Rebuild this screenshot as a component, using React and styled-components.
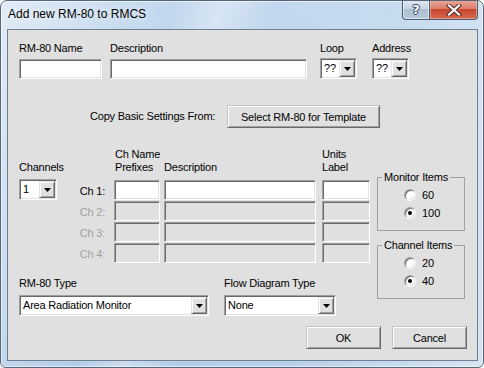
import React from 'react';
import styled, { createGlobalStyle } from 'styled-components';

const GlobalStyle = createGlobalStyle`
  html, body {
    margin: 0;
    padding: 0;
    background: #fff;
  }
  body {
    font-family: "Liberation Sans", Arial, sans-serif;
    font-size: 11px;
    color: #000;
  }
`;

const FACE = '#e0e0e0';

const Window = styled.div`
  box-sizing: border-box;
  width: 484px;
  height: 368px;
  display: flex;
  flex-direction: column;
  padding: 0 5px 6px 6px;
  border: 1px solid #56677a;
  border-radius: 7px 7px 6px 6px;
  background:
    linear-gradient(105deg, rgba(255,255,255,0.5) 0%, rgba(255,255,255,0.15) 20%, rgba(255,255,255,0) 30%, rgba(255,255,255,0.35) 38%, rgba(255,255,255,0) 47%, rgba(255,255,255,0.1) 70%, rgba(255,255,255,0.45) 100%),
    linear-gradient(to bottom, #c2d8ee 0%, #b3cde8 100%);
  box-shadow: inset 0 0 0 1px rgba(255,255,255,0.55);
  overflow: hidden;
`;

const TitleBar = styled.div`
  height: 28px;
  flex-shrink: 0;
  display: flex;
  justify-content: space-between;
  align-items: flex-start;
  margin: 0 -5px 0 -6px;
  padding: 0 5px 0 7px;
`;

const Title = styled.span`
  font-size: 12px;
  line-height: 15px;
  padding-top: 6px;
  color: #000;
  text-shadow: 0 0 6px rgba(255,255,255,0.9);
`;

const Caption = styled.div`
  display: flex;
  margin-top: -1px;
`;

const CaptionButton = styled.div`
  box-sizing: border-box;
  height: 20px;
  display: flex;
  align-items: center;
  justify-content: center;
  border: 1px solid #4c5d71;
  border-top: none;
`;

const HelpButton = styled(CaptionButton)`
  width: 28px;
  border-radius: 0 0 0 4px;
  background: linear-gradient(to bottom, #e1e9f2 0%, #c9d6e4 45%, #aebfd3 50%, #b9cadc 100%);
  box-shadow: inset 0 0 0 1px rgba(255,255,255,0.5);
`;

const CloseButton = styled(CaptionButton)`
  width: 48px;
  border-left: none;
  border-radius: 0 0 4px 0;
  background: linear-gradient(to bottom, #e9a99b 0%, #dc7e6c 45%, #c8452f 50%, #d4684f 100%);
  box-shadow: inset 0 0 0 1px rgba(255,255,255,0.35);
`;

const HelpGlyph = styled.span`
  font-family: "DejaVu Sans", sans-serif;
  font-weight: bold;
  font-size: 13px;
  line-height: 13px;
  color: #fff;
  text-shadow: 0 0 1px #34465b, 1px 0 0 #34465b, -1px 0 0 #34465b, 0 1px 0 #34465b, 0 -1px 0 #34465b;
`;

const Client = styled.div`
  flex: 1;
  display: flex;
  flex-direction: column;
  border: 1px solid #6f7f91;
  background: ${FACE};
  padding: 12px 10px 10px 11px;
`;

const Label = styled.span`
  display: block;
  font-size: 11px;
  line-height: 13px;
  letter-spacing: -0.2px;
  white-space: nowrap;
  color: ${p => (p.$disabled ? '#a0a0a0' : '#000')};
`;

const Row = styled.div`
  display: flex;
  align-items: flex-start;
`;

const Field = styled.div`
  display: flex;
  flex-direction: column;
  gap: ${p => p.$gap ?? 4}px;
  width: ${p => p.$width}px;
  margin-left: ${p => p.$ml ?? 0}px;
`;

const sunken = `
  box-sizing: border-box;
  border: 1px solid;
  border-color: #a0a0a0 #ffffff #ffffff #a0a0a0;
  box-shadow: inset 1px 1px 0 #696969, inset -1px -1px 0 #e3e3e3;
`;

const TextBox = styled.input`
  ${sunken}
  width: ${p => p.$width}px;
  height: 20px;
  margin: 0;
  padding: 0 3px;
  font: inherit;
  outline: none;
  background: #fff;
  &:disabled {
    background: ${FACE};
  }
`;

const ComboBox = styled.div`
  ${sunken}
  width: ${p => p.$width}px;
  height: 21px;
  padding: 1px;
  display: flex;
  background: #fff;
`;

const ComboText = styled.span`
  flex: 1;
  padding-left: 2px;
  line-height: 17px;
  font-size: 11px;
  letter-spacing: -0.2px;
  white-space: nowrap;
  overflow: hidden;
`;

const DropButton = styled.span`
  box-sizing: border-box;
  width: 16px;
  height: 17px;
  display: flex;
  align-items: center;
  justify-content: center;
  background: ${FACE};
  border: 1px solid;
  border-color: #e3e3e3 #696969 #696969 #e3e3e3;
  box-shadow: inset 1px 1px 0 #fff, inset -1px -1px 0 #a0a0a0;
`;

function Combo({ value, width, className }) {
  return (
    <ComboBox $width={width} className={className}>
      <ComboText>{value}</ComboText>
      <DropButton>
        <svg width="7" height="4" viewBox="0 0 7 4">
          <polygon points="0,0 7,0 3.5,4" fill="#000" />
        </svg>
      </DropButton>
    </ComboBox>
  );
}

const Button = styled.button`
  box-sizing: border-box;
  width: ${p => p.$width ?? 75}px;
  height: 23px;
  margin: 0;
  padding: 0;
  font: inherit;
  font-size: 11px;
  letter-spacing: -0.2px;
  color: #000;
  background: ${FACE};
  border: 1px solid;
  border-color: #c4c4c4 #696969 #696969 #c4c4c4;
  box-shadow: inset 1px 1px 0 #fff, inset -1px -1px 0 #a0a0a0;
`;

const CopyRow = styled.div`
  display: flex;
  align-items: center;
  margin-top: 26px;
  padding-left: 71px;
`;

const CopyLabel = styled(Label)`
  width: 137px;
`;

const ChannelSection = styled.div`
  display: flex;
  gap: 7px;
  margin-top: 20px;
`;

const LeftColumn = styled.div`
  display: flex;
  flex-direction: column;
  width: 351px;
`;

const ChannelGrid = styled.div`
  display: grid;
  grid-template-columns: 38px 57px 50px 158px 48px;
  grid-template-rows: 31px repeat(4, 20px);
  row-gap: 1px;
`;

const HeadCell = styled.div`
  padding-top: ${p => (p.$single ? 13 : 0)}px;
  padding-left: ${p => p.$indent ?? 0}px;
`;

const ChLabel = styled(Label)`
  text-align: right;
  padding-right: 9px;
  line-height: 20px;
  padding-top: 1px;
`;

const ChannelsCombo = styled(Combo)`
  margin-top: -1px;
`;

const TypeRow = styled(Row)`
  margin-top: 14px;
  gap: 15px;
`;

const RightColumn = styled.div`
  display: flex;
  flex-direction: column;
  gap: 8px;
  width: 88px;
  margin-top: 23px;
`;

const Group = styled.fieldset`
  box-sizing: border-box;
  margin: 0;
  min-inline-size: 0;
  width: 88px;
  padding: 2px 0 8px 4px;
  border: 1px solid #a0a0a0;
  display: flex;
  flex-direction: column;
`;

const Legend = styled.legend`
  padding: 0 2px;
  margin: 0;
  font-size: 11px;
  line-height: 13px;
  letter-spacing: -0.2px;
  white-space: nowrap;
`;

const RadioRow = styled.label`
  height: 18px;
  display: flex;
  align-items: center;
  gap: 6px;
  margin-left: 22px;
  font-size: 11px;
`;

const RadioCircle = styled.span`
  box-sizing: border-box;
  width: 12px;
  height: 12px;
  border-radius: 50%;
  background: #fff;
  border: 1px solid;
  border-color: #a0a0a0 #f6f6f6 #f6f6f6 #a0a0a0;
  box-shadow: inset 1px 1px 0 #696969, inset -1px -1px 0 #e3e3e3;
  display: flex;
  align-items: center;
  justify-content: center;
  &::after {
    content: '';
    width: 4px;
    height: 4px;
    border-radius: 50%;
    background: ${p => (p.$checked ? '#000' : 'transparent')};
  }
`;

const ButtonRow = styled.div`
  display: flex;
  justify-content: flex-end;
  gap: 11px;
  margin-top: 10px;
`;

function Radio({ label, checked }) {
  return (
    <RadioRow>
      <RadioCircle $checked={checked} />
      {label}
    </RadioRow>
  );
}

const channels = ['Ch 1:', 'Ch 2:', 'Ch 3:', 'Ch 4:'];

export default function App() {
  return (
    <>
      <GlobalStyle />
      <Window>
        <TitleBar>
          <Title>Add new RM-80 to RMCS</Title>
          <Caption>
            <HelpButton>
              <HelpGlyph>?</HelpGlyph>
            </HelpButton>
            <CloseButton>
              <svg width="16" height="12" viewBox="0 0 16 12">
                <path d="M3 1.5 L13 10.5 M13 1.5 L3 10.5" stroke="#5a2a22" strokeWidth="4.2" strokeLinecap="square" />
                <path d="M3 1.5 L13 10.5 M13 1.5 L3 10.5" stroke="#fff" strokeWidth="2.2" strokeLinecap="square" />
              </svg>
            </CloseButton>
          </Caption>
        </TitleBar>

        <Client>
          <Row>
            <Field $width={83}>
              <Label>RM-80 Name</Label>
              <TextBox $width={83} />
            </Field>
            <Field $width={197} $ml={8}>
              <Label>Description</Label>
              <TextBox $width={197} />
            </Field>
            <Field $width={37} $ml={13} $gap={3}>
              <Label>Loop</Label>
              <Combo value="??" width={37} />
            </Field>
            <Field $width={37} $ml={15} $gap={3}>
              <Label>Address</Label>
              <Combo value="??" width={37} />
            </Field>
          </Row>

          <CopyRow>
            <CopyLabel>Copy Basic Settings From:</CopyLabel>
            <Button $width={153}>Select RM-80 for Template</Button>
          </CopyRow>

          <ChannelSection>
            <LeftColumn>
              <ChannelGrid>
                <HeadCell $single>
                  <Label>Channels</Label>
                </HeadCell>
                <HeadCell />
                <HeadCell $indent={1}>
                  <Label>Ch Name</Label>
                  <Label>Prefixes</Label>
                </HeadCell>
                <HeadCell $single>
                  <Label>Description</Label>
                </HeadCell>
                <HeadCell>
                  <Label>Units</Label>
                  <Label>Label</Label>
                </HeadCell>

                {channels.map((ch, i) => (
                  <React.Fragment key={ch}>
                    {i === 0 ? <ChannelsCombo value="1" width={38} /> : <span />}
                    <ChLabel $disabled={i > 0}>{ch}</ChLabel>
                    <TextBox $width={46} disabled={i > 0} />
                    <TextBox $width={152} disabled={i > 0} />
                    <TextBox $width={48} disabled={i > 0} />
                  </React.Fragment>
                ))}
              </ChannelGrid>

              <TypeRow>
                <Field $width={190} $gap={5}>
                  <Label>RM-80 Type</Label>
                  <Combo value="Area Radiation Monitor" width={190} />
                </Field>
                <Field $width={112} $gap={5}>
                  <Label>Flow Diagram Type</Label>
                  <Combo value="None" width={112} />
                </Field>
              </TypeRow>
            </LeftColumn>

            <RightColumn>
              <Group>
                <Legend>Monitor Items</Legend>
                <Radio label="60" />
                <Radio label="100" checked />
              </Group>
              <Group>
                <Legend>Channel Items</Legend>
                <Radio label="20" />
                <Radio label="40" checked />
              </Group>
            </RightColumn>
          </ChannelSection>

          <ButtonRow>
            <Button>OK</Button>
            <Button>Cancel</Button>
          </ButtonRow>
        </Client>
      </Window>
    </>
  );
}
